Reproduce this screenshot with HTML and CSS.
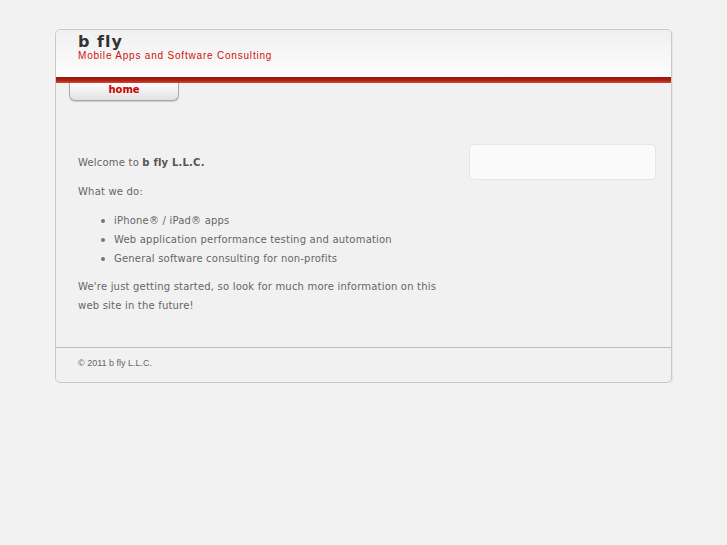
FILE: index.html
```html
<!DOCTYPE html>
<html lang="en">
<head>
    <meta charset="UTF-8">
    <title>b fly</title>
    <link rel="stylesheet" href="styles.css">
</head>
<body>
    <div class="page">
        <div class="header">
            <div class="site-name">b fly</div>
            <div class="tagline">Mobile Apps and Software Consulting</div>
        </div>
        <div class="redbar"></div>
        <div class="nav">
            <a class="tab" href="#">home</a>
        </div>
        <div class="main">
            <div class="content">
                <p>Welcome to <b>b fly L.L.C.</b></p>
                <p>What we do:</p>
                <ul>
                    <li>iPhone&reg; / iPad&reg; apps</li>
                    <li>Web application performance testing and automation</li>
                    <li>General software consulting for non-profits</li>
                </ul>
                <p>We're just getting started, so look for much more information on this web site in the future!</p>
            </div>
            <div class="sidebar">
                <div class="side-box"></div>
            </div>
        </div>
        <div class="footer">&copy; 2011 b fly L.L.C.</div>
    </div>
</body>
</html>
```

FILE: styles.css
```css
body {
    margin: 0;
    background: #f2f2f2;
    font-family: "DejaVu Sans", Verdana, sans-serif;
    color: #666;
}
.page {
    width: 615px;
    margin: 29px 0 0 55px;
    border: 1px solid #c8c8c8;
    border-radius: 5px;
    box-shadow: 0 0 2px #fff, 1px 1px 1px #ddd;
    background: #f1f1f1;
}
.header {
    height: 47px;
    padding-left: 22px;
    background: linear-gradient(to bottom, #f0f0f0, #fdfdfd);
    border-radius: 5px 5px 0 0;
}
.site-name {
    padding-top: 4px;
    font-size: 16px;
    font-weight: bold;
    letter-spacing: 1px;
    color: #333;
    line-height: 16px;
}
.tagline {
    font-family: "Liberation Sans", Arial, sans-serif;
    font-size: 10px;
    letter-spacing: 0.8px;
    color: #d01010;
    line-height: 11px;
}
.redbar {
    height: 6px;
    background: linear-gradient(to bottom, #8e1708, #b32412 60%, #cf4a3a);
}
.nav {
    height: 18px;
    padding-left: 13px;
}
.tab {
    display: block;
    width: 108px;
    height: 17px;
    line-height: 14px;
    text-align: center;
    font-size: 10px;
    font-weight: bold;
    color: #cc0000;
    text-decoration: none;
    border: 1px solid #a8a8a8;
    border-top: none;
    border-radius: 0 0 6px 6px;
    background: linear-gradient(to bottom, #fdfdfd, #e2e2e2);
    box-shadow: 0 1px 1px #ccc;
}
.main {
    display: flex;
    justify-content: space-between;
    padding: 43px 15px 22px 22px;
    border-bottom: 1px solid #bdbdbd;
}
.content {
    width: 370px;
    font-size: 10px;
    line-height: 19px;
    letter-spacing: 0.2px;
}
.content p {
    margin: 9px 0 10px;
}
.content ul {
    margin: 0 0 9px;
    padding-left: 36px;
    list-style: none;
}
.content li {
    position: relative;
}
.content li::before {
    content: "";
    position: absolute;
    left: -13px;
    top: 8px;
    width: 4px;
    height: 4px;
    border-radius: 50%;
    background: #777;
}
.content b {
    color: #555;
}
.sidebar {
    width: 187px;
}
.side-box {
    height: 34px;
    background: #fafafa;
    border: 1px solid #e6e6e6;
    border-radius: 4px;
}
.footer {
    height: 34px;
    line-height: 31px;
    padding-left: 22px;
    font-family: "Liberation Sans", Arial, sans-serif;
    font-size: 9px;
    color: #666;
}
```
